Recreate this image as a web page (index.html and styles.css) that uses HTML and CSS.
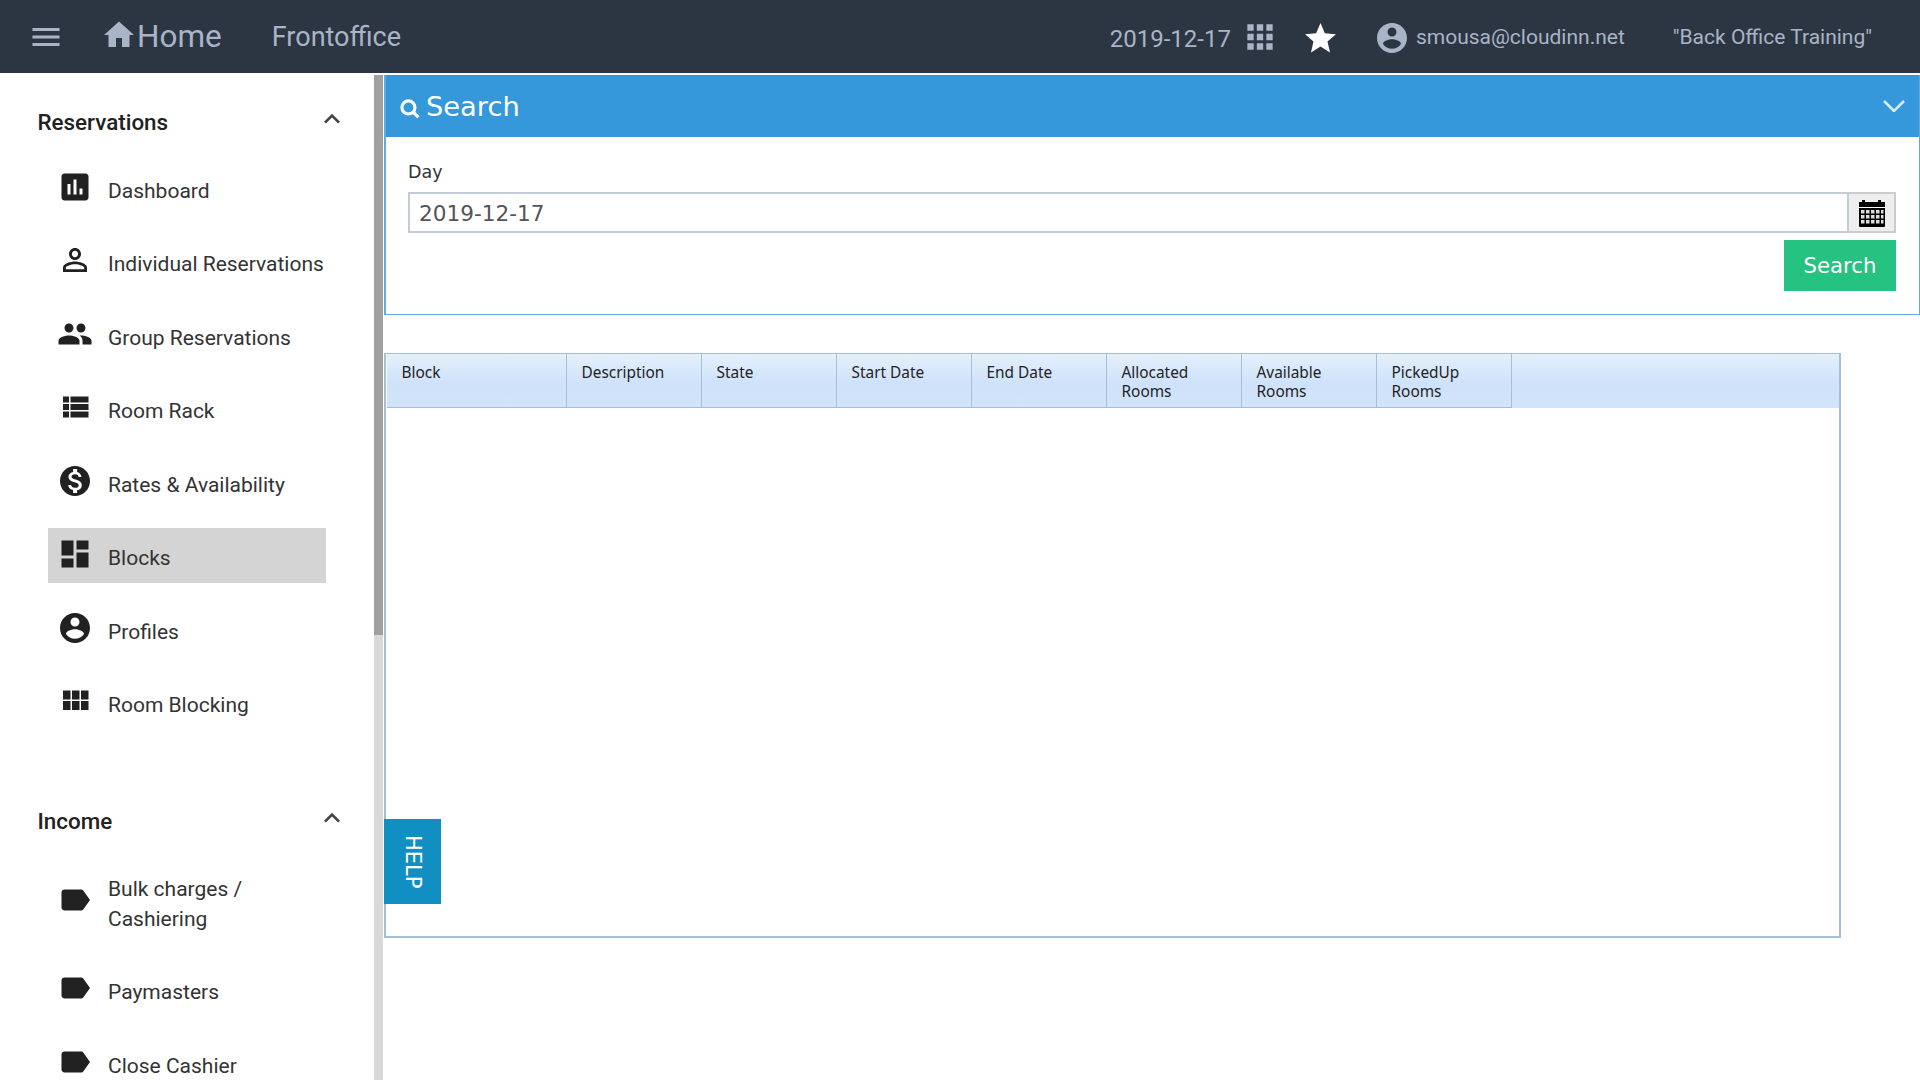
FILE: index.html
```html
<!DOCTYPE html>
<html lang="en">
<head>
    <meta charset="UTF-8">
    <meta name="viewport" content="width=device-width, initial-scale=1.0">
    <title>Blocks - Frontoffice</title>
    <link rel="stylesheet" href="styles.css">
</head>
<body>
    <header class="topbar">
        <svg class="top-icon menu-icon" viewBox="0 0 24 24"><path d="M3 18h18v-2H3v2zm0-5h18v-2H3v2zm0-7v2h18V6H3z"/></svg>
        <svg class="top-icon home-icon" viewBox="0 0 24 24"><path d="M10 20v-6h4v6h5v-8h3L12 3 2 12h3v8z"/></svg>
        <a class="home-link">Home</a>
        <a class="module-link">Frontoffice</a>
        <div class="topbar-right">
            <span class="top-date">2019-12-17</span>
            <svg class="top-icon apps-icon" viewBox="0 0 24 24"><path d="M4 8h4V4H4v4zm6 12h4v-4h-4v4zm-6 0h4v-4H4v4zm0-6h4v-4H4v4zm6 0h4v-4h-4v4zm6-10v4h4V4h-4zm-6 4h4V4h-4v4zm6 6h4v-4h-4v4zm0 6h4v-4h-4v4z"/></svg>
            <svg class="top-icon star-icon" viewBox="0 0 24 24"><path d="M12 17.27L18.18 21l-1.64-7.03L22 9.24l-7.19-.61L12 2 9.19 8.63 2 9.24l5.46 4.73L5.82 21z"/></svg>
            <svg class="top-icon user-icon" viewBox="0 0 24 24"><path d="M12 2C6.48 2 2 6.48 2 12s4.48 10 10 10 10-4.48 10-10S17.52 2 12 2zm0 3c1.66 0 3 1.34 3 3s-1.34 3-3 3-3-1.34-3-3 1.34-3 3-3zm0 14.2c-2.5 0-4.71-1.28-6-3.22.03-1.99 4-3.08 6-3.08 1.99 0 5.97 1.09 6 3.08-1.29 1.94-3.5 3.22-6 3.22z"/></svg>
            <span class="top-user">smousa@cloudinn.net</span>
            <span class="top-hotel">"Back Office Training"</span>
        </div>
    </header>

    <div class="layout">
        <nav class="sidebar">
            <div class="nav-title">
                <span>Reservations</span>
                <svg class="nav-toggle" viewBox="0 0 24 24"><path d="M12 8l-6 6 1.41 1.41L12 10.83l4.59 4.58L18 14z"/></svg>
            </div>
            <ul class="nav-list">
                <li class="nav-item"><svg class="nav-icon" viewBox="0 0 24 24"><path d="M19 3H5c-1.1 0-2 .9-2 2v14c0 1.1.9 2 2 2h14c1.1 0 2-.9 2-2V5c0-1.1-.9-2-2-2zM9 17H7v-7h2v7zm4 0h-2V7h2v10zm4 0h-2v-4h2v4z"/></svg><span>Dashboard</span></li>
                <li class="nav-item"><svg class="nav-icon" viewBox="0 0 24 24"><path d="M12 5.9c1.16 0 2.1.94 2.1 2.1s-.94 2.1-2.1 2.1S9.9 9.16 9.9 8s.94-2.1 2.1-2.1m0 9c2.97 0 6.1 1.46 6.1 2.1v1.1H5.9V17c0-.64 3.13-2.1 6.1-2.1M12 4C9.79 4 8 5.79 8 8s1.79 4 4 4 4-1.79 4-4-1.79-4-4-4zm0 9c-2.67 0-8 1.34-8 4v3h16v-3c0-2.66-5.33-4-8-4z"/></svg><span>Individual Reservations</span></li>
                <li class="nav-item"><svg class="nav-icon" viewBox="0 0 24 24"><path d="M16 11c1.66 0 2.99-1.34 2.99-3S17.66 5 16 5c-1.66 0-3 1.34-3 3s1.34 3 3 3zm-8 0c1.66 0 2.99-1.34 2.99-3S9.66 5 8 5C6.34 5 5 6.34 5 8s1.34 3 3 3zm0 2c-2.33 0-7 1.17-7 3.5V19h14v-2.5c0-2.33-4.67-3.5-7-3.5zm8 0c-.29 0-.62.02-.97.05 1.16.84 1.97 1.97 1.97 3.45V19h6v-2.5c0-2.33-4.67-3.5-7-3.5z"/></svg><span>Group Reservations</span></li>
                <li class="nav-item"><svg class="nav-icon" viewBox="0 0 24 24"><path d="M4 14h4v-4H4v4zm0 5h4v-4H4v4zm0-10h4V5H4v4zm5 5h12v-4H9v4zm0 5h12v-4H9v4zM9 5v4h12V5H9z"/></svg><span>Room Rack</span></li>
                <li class="nav-item"><svg class="nav-icon" viewBox="0 0 24 24"><path d="M12 2C6.48 2 2 6.48 2 12s4.48 10 10 10 10-4.48 10-10S17.52 2 12 2zm1.41 16.09V20h-2.67v-1.93c-1.71-.36-3.16-1.46-3.27-3.4h1.96c.1 1.05.82 1.87 2.65 1.87 1.96 0 2.4-.98 2.4-1.59 0-.83-.44-1.61-2.67-2.14-2.48-.6-4.18-1.62-4.18-3.67 0-1.72 1.39-2.84 3.11-3.21V4h2.67v1.95c1.86.45 2.79 1.86 2.85 3.39H14.3c-.05-1.11-.64-1.87-2.22-1.87-1.5 0-2.4.68-2.4 1.64 0 .84.65 1.39 2.67 1.91s4.18 1.39 4.18 3.91c-.01 1.83-1.38 2.83-3.12 3.16z"/></svg><span>Rates &amp; Availability</span></li>
                <li class="nav-item active"><svg class="nav-icon" viewBox="0 0 24 24"><path d="M3 13h8V3H3v10zm0 8h8v-6H3v6zm10 0h8V11h-8v10zm0-18v6h8V3h-8z"/></svg><span>Blocks</span></li>
                <li class="nav-item"><svg class="nav-icon" viewBox="0 0 24 24"><path d="M12 2C6.48 2 2 6.48 2 12s4.48 10 10 10 10-4.48 10-10S17.52 2 12 2zm0 3c1.66 0 3 1.34 3 3s-1.34 3-3 3-3-1.34-3-3 1.34-3 3-3zm0 14.2c-2.5 0-4.71-1.28-6-3.22.03-1.99 4-3.08 6-3.08 1.99 0 5.97 1.09 6 3.08-1.29 1.94-3.5 3.22-6 3.22z"/></svg><span>Profiles</span></li>
                <li class="nav-item"><svg class="nav-icon" viewBox="0 0 24 24"><path d="M4 11h5V5H4v6zm0 7h5v-6H4v6zm6 0h5v-6h-5v6zm6 0h5v-6h-5v6zm-6-7h5V5h-5v6zm6-6v6h5V5h-5z"/></svg><span>Room Blocking</span></li>
            </ul>

            <div class="nav-title nav-title-income">
                <span>Income</span>
                <svg class="nav-toggle" viewBox="0 0 24 24"><path d="M12 8l-6 6 1.41 1.41L12 10.83l4.59 4.58L18 14z"/></svg>
            </div>
            <ul class="nav-list">
                <li class="nav-item"><svg class="nav-icon" viewBox="0 0 24 24"><path d="M17.63 5.84C17.27 5.33 16.67 5 16 5L5 5.01C3.9 5.01 3 5.9 3 7v10c0 1.1.9 1.99 2 1.99L16 19c.67 0 1.27-.33 1.63-.84L22 12l-4.37-6.16z"/></svg><span>Bulk charges / Cashiering</span></li>
                <li class="nav-item"><svg class="nav-icon" viewBox="0 0 24 24"><path d="M17.63 5.84C17.27 5.33 16.67 5 16 5L5 5.01C3.9 5.01 3 5.9 3 7v10c0 1.1.9 1.99 2 1.99L16 19c.67 0 1.27-.33 1.63-.84L22 12l-4.37-6.16z"/></svg><span>Paymasters</span></li>
                <li class="nav-item"><svg class="nav-icon" viewBox="0 0 24 24"><path d="M17.63 5.84C17.27 5.33 16.67 5 16 5L5 5.01C3.9 5.01 3 5.9 3 7v10c0 1.1.9 1.99 2 1.99L16 19c.67 0 1.27-.33 1.63-.84L22 12l-4.37-6.16z"/></svg><span>Close Cashier</span></li>
            </ul>
        </nav>
        <div class="side-scrollbar"><div class="side-scrollbar-thumb"></div></div>

        <main class="content">
            <section class="search-panel">
                <div class="panel-head">
                    <svg class="panel-search-icon" viewBox="0 0 20 20"><circle cx="9" cy="9" r="6.2"/><path d="M13.5 13.5L18.5 18.5"/></svg>
                    <h2 class="panel-title">Search</h2>
                    <svg class="panel-toggle" viewBox="0 0 22 12"><path d="M1 1l10 10L21 1"/></svg>
                </div>
                <form class="panel-body">
                    <label class="field-label" for="day">Day</label>
                    <div class="input-group">
                        <input class="field-input" id="day" type="text" value="2019-12-17">
                        <span class="input-addon">
                            <svg class="calendar-icon" viewBox="0 0 28 28">
                                <path class="cal-frame" d="M4 3V1h3v2h13V1h3v2h4v24a1 1 0 0 1-1 1H2a1 1 0 0 1-1-1V3z"/>
                                <path class="cal-line" d="M1 8h26v1H1z"/>
                                <path class="cal-cells" d="M3 11h3.5v3.5H3zM8 11h3.5v3.5H8zM13 11h3.5v3.5H13zM18 11h3.5v3.5H18zM23 11h2.5v3.5H23zM3 16h3.5v3.5H3zM8 16h3.5v3.5H8zM13 16h3.5v3.5H13zM18 16h3.5v3.5H18zM23 16h2.5v3.5H23zM3 21h3.5v3.5H3zM8 21h3.5v3.5H8zM13 21h3.5v3.5H13zM18 21h3.5v3.5H18zM23 21h2.5v3.5H23z"/>
                            </svg>
                        </span>
                    </div>
                    <div class="form-actions">
                        <button type="button" class="search-btn">Search</button>
                    </div>
                </form>
            </section>

            <section class="grid-box">
                <table class="blocks-table">
                    <thead>
                        <tr>
                            <th class="col-block">Block</th>
                            <th>Description</th>
                            <th>State</th>
                            <th>Start Date</th>
                            <th>End Date</th>
                            <th>Allocated Rooms</th>
                            <th>Available Rooms</th>
                            <th>PickedUp Rooms</th>
                            <th class="col-filler"></th>
                        </tr>
                    </thead>
                </table>
            </section>

            <a class="help-tab">HELP</a>
        </main>
    </div>
</body>
</html>
```

FILE: styles.css
```css
/* CSS Reset */
* {
    margin: 0;
    padding: 0;
    box-sizing: border-box;
}

/* Global Styles */
body {
    height: 1080px;
    overflow: hidden;
    display: flex;
    flex-direction: column;
    font-family: 'Roboto', sans-serif;
    color: #333;
    background-color: #fff;
}

/* Top bar */
.topbar {
    flex: 0 0 73px;
    display: flex;
    align-items: center;
    padding-left: 28px;
    background-color: #2c3643;
    color: #a9b4c6;
}

.top-icon {
    display: block;
    flex: none;
    fill: #a9b4c6;
}

.menu-icon {
    width: 36px;
    height: 36px;
    margin-right: 37px;
}

.home-icon {
    width: 36px;
    height: 36px;
    margin-top: -3px;
}

.home-link {
    font-size: 31.5px;
}

.module-link {
    font-size: 27px;
    margin-left: 50px;
}

.topbar-right {
    margin-left: auto;
    display: flex;
    align-items: center;
    padding-right: 48px;
}

.top-date {
    font-size: 24px;
    margin-top: 5px;
}

.apps-icon {
    width: 38px;
    height: 38px;
    margin-left: 10px;
}

.star-icon {
    width: 37px;
    height: 37px;
    margin-left: 23px;
    margin-top: 4px;
    fill: #fff;
}

.user-icon {
    width: 36px;
    height: 36px;
    margin-left: 35px;
    margin-top: 2px;
}

.top-user {
    font-size: 21px;
    margin-left: 6px;
}

.top-hotel {
    font-size: 21px;
    margin-left: 48px;
}

/* Sidebar */
.layout {
    flex: 1;
    display: flex;
    min-height: 0;
    margin-top: 2px;
}

.sidebar {
    flex: 0 0 374px;
    overflow: hidden;
    padding-top: 26px;
    background-color: #fff;
}

.side-scrollbar {
    flex: 0 0 9px;
    background-color: #d9d9d9;
}

.side-scrollbar-thumb {
    height: 560px;
    background-color: #a0a0a0;
}

.nav-title {
    display: flex;
    justify-content: space-between;
    align-items: center;
    height: 42px;
    padding: 0 26px 0 37.5px;
    font-size: 22.4px;
    font-weight: 500;
    color: #212121;
}

.nav-title-income {
    margin-top: 70.5px;
}

.nav-toggle {
    width: 32px;
    height: 32px;
    margin-top: -6px;
    fill: #444;
}

.nav-list {
    list-style-type: none;
    margin-top: 17.4px;
}

.nav-item {
    display: flex;
    align-items: center;
    gap: 15px;
    width: 278px;
    margin: 0 0 18.45px 48px;
    padding: 15px 0 9px 9px;
    font-size: 21px;
    line-height: 30px;
    min-height: 55px;
}

.nav-item.active {
    background-color: #d4d4d4;
}

.nav-icon {
    flex: none;
    width: 36px;
    height: 36px;
    margin-top: -8px;
    fill: #212121;
}

/* Search panel */
.content {
    position: relative;
    flex: 1;
    min-width: 0;
    margin-left: 1px;
}

.search-panel {
    height: 240px;
    border: 1px solid #5dade2;
    border-left-width: 2px;
    border-top: none;
}

.panel-head {
    display: flex;
    align-items: center;
    height: 62px;
    padding: 0 14px 0 13px;
    background-color: #3498db;
    color: #fff;
}

.panel-search-icon {
    width: 21px;
    height: 21px;
    margin-top: 5px;
    fill: none;
    stroke: #fff;
    stroke-width: 3;
}

.panel-title {
    flex: 1;
    margin-left: 6px;
    font-family: 'DejaVu Sans', sans-serif;
    font-size: 27.3px;
    font-weight: normal;
}

.panel-toggle {
    width: 22px;
    height: 12px;
    fill: none;
    stroke: #d6eaf8;
    stroke-width: 2.6;
}

.panel-body {
    padding: 25px 23px 0 22px;
    font-family: 'DejaVu Sans', sans-serif;
}

.field-label {
    display: block;
    height: 30px;
    font-size: 17.5px;
    line-height: 20px;
    color: #333;
}

.input-group {
    display: flex;
    height: 41px;
}

.field-input {
    flex: 1;
    min-width: 0;
    padding: 1px 9px 0;
    border: 2px solid #c3cad9;
    border-right: 0;
    font-family: inherit;
    font-size: 21.6px;
    color: #555;
    outline: none;
}

.input-addon {
    flex: 0 0 49px;
    display: flex;
    align-items: center;
    justify-content: center;
    background-color: #eee;
    border: 2px solid #c3cad9;
    border-color: #ccc #ccc #ccc #c3cad9;
}

.calendar-icon {
    width: 28px;
    height: 28px;
}

.cal-frame {
    fill: #000;
}

.cal-line {
    fill: #fff;
}

.cal-cells {
    fill: #ddd;
}

.form-actions {
    display: flex;
    justify-content: flex-end;
    margin-top: 7px;
}

.search-btn {
    width: 112px;
    height: 51px;
    border: none;
    background-color: #26c281;
    color: #fff;
    font-family: inherit;
    font-size: 21.2px;
}

/* Blocks grid */
.grid-box {
    width: 1457px;
    height: 585px;
    margin-top: 38px;
    border: 2px solid #a5bfd8;
    border-top-width: 1px;
    padding-left: 1px;
}

.blocks-table {
    width: 100%;
    table-layout: fixed;
    border-collapse: separate;
    border-spacing: 0;
    font-family: 'Noto Sans', sans-serif;
}

.blocks-table th {
    width: 135px;
    height: 54px;
    padding: 8.5px 14px 0 14.5px;
    vertical-align: top;
    text-align: left;
    font-size: 15.4px;
    line-height: 19px;
    font-weight: normal;
    color: #222;
    background: linear-gradient(#e4f0fd, #cfe2fb 55%, #d2e4fb);
    border-right: 1px solid #a5bfd8;
    border-bottom: 1px solid #a5bfd8;
}

.blocks-table .col-block {
    width: 180px;
}

.blocks-table .col-filler {
    width: auto;
    border: none;
}

/* Help tab */
.help-tab {
    position: absolute;
    left: 0;
    top: 744px;
    width: 57px;
    height: 85px;
    display: flex;
    align-items: center;
    justify-content: center;
    writing-mode: vertical-rl;
    background-color: #118fc2;
    color: #fff;
    font-family: 'DejaVu Sans', sans-serif;
    font-size: 21px;
}
```
